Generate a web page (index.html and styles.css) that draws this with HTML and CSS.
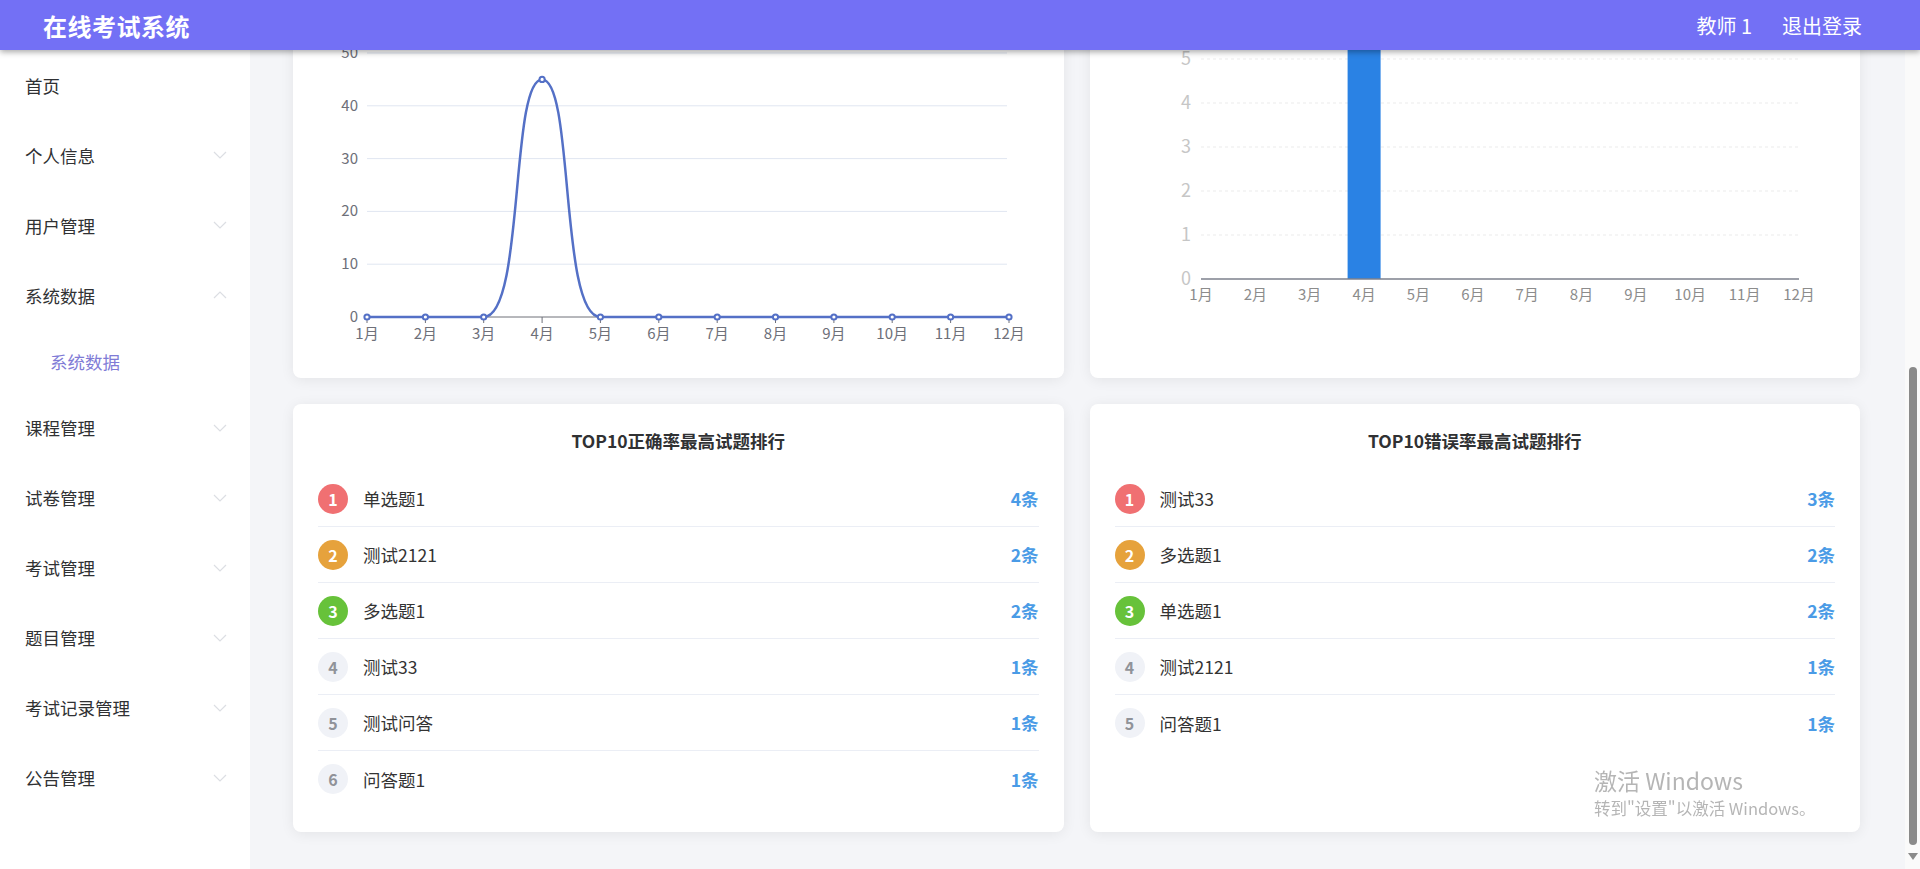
FILE: index.html
```html
<!DOCTYPE html>
<html lang="zh-CN">
<head>
    <meta charset="UTF-8">
    <meta name="viewport" content="width=device-width, initial-scale=1.0">
    <title>在线考试系统</title>
    <link rel="stylesheet" href="styles.css">
</head>
<body>
    <header class="topbar">
        <div class="brand">在线考试系统</div>
        <div class="user-box">
            <span>教师 1</span>
            <span>退出登录</span>
        </div>
    </header>

    <div class="layout">
        <!-- side menu -->
        <nav class="sidebar">
            <div class="menu-item">首页</div>
            <div class="menu-item">个人信息<svg class="arrow" width="14" height="8" viewBox="0 0 14 8"><polyline points="1,1 7,7 13,1"/></svg></div>
            <div class="menu-item">用户管理<svg class="arrow" width="14" height="8" viewBox="0 0 14 8"><polyline points="1,1 7,7 13,1"/></svg></div>
            <div class="menu-item">系统数据<svg class="arrow" width="14" height="8" viewBox="0 0 14 8"><polyline points="1,7 7,1 13,7"/></svg></div>
            <div class="menu-item sub active">系统数据</div>
            <div class="menu-item">课程管理<svg class="arrow" width="14" height="8" viewBox="0 0 14 8"><polyline points="1,1 7,7 13,1"/></svg></div>
            <div class="menu-item">试卷管理<svg class="arrow" width="14" height="8" viewBox="0 0 14 8"><polyline points="1,1 7,7 13,1"/></svg></div>
            <div class="menu-item">考试管理<svg class="arrow" width="14" height="8" viewBox="0 0 14 8"><polyline points="1,1 7,7 13,1"/></svg></div>
            <div class="menu-item">题目管理<svg class="arrow" width="14" height="8" viewBox="0 0 14 8"><polyline points="1,1 7,7 13,1"/></svg></div>
            <div class="menu-item">考试记录管理<svg class="arrow" width="14" height="8" viewBox="0 0 14 8"><polyline points="1,1 7,7 13,1"/></svg></div>
            <div class="menu-item">公告管理<svg class="arrow" width="14" height="8" viewBox="0 0 14 8"><polyline points="1,1 7,7 13,1"/></svg></div>
        </nav>

        <main class="main">
            <div class="content">
                <!-- line chart -->
                <div class="card chart-card">
                    <svg width="769" height="400" class="chart">
                        <g class="grid-line">
                            <line x1="74" y1="75" x2="714" y2="75"/>
                            <line x1="74" y1="127.8" x2="714" y2="127.8"/>
                            <line x1="74" y1="180.6" x2="714" y2="180.6"/>
                            <line x1="74" y1="233.4" x2="714" y2="233.4"/>
                            <line x1="74" y1="286.2" x2="714" y2="286.2"/>
                        </g>
                        <g class="y-label" text-anchor="end">
                            <text x="65" y="80">50</text>
                            <text x="65" y="133">40</text>
                            <text x="65" y="186">30</text>
                            <text x="65" y="238">20</text>
                            <text x="65" y="291">10</text>
                            <text x="65" y="344">0</text>
                        </g>
                        <line class="axis" x1="74" y1="339" x2="716" y2="339"/>
                        <g class="axis">
                            <line x1="74" y1="339" x2="74" y2="345"/>
                            <line x1="132.4" y1="339" x2="132.4" y2="345"/>
                            <line x1="190.7" y1="339" x2="190.7" y2="345"/>
                            <line x1="249.1" y1="339" x2="249.1" y2="345"/>
                            <line x1="307.4" y1="339" x2="307.4" y2="345"/>
                            <line x1="365.8" y1="339" x2="365.8" y2="345"/>
                            <line x1="424.2" y1="339" x2="424.2" y2="345"/>
                            <line x1="482.5" y1="339" x2="482.5" y2="345"/>
                            <line x1="540.9" y1="339" x2="540.9" y2="345"/>
                            <line x1="599.2" y1="339" x2="599.2" y2="345"/>
                            <line x1="657.6" y1="339" x2="657.6" y2="345"/>
                            <line x1="716" y1="339" x2="716" y2="345"/>
                        </g>
                        <g class="x-label" text-anchor="middle">
                            <text x="74" y="361">1月</text>
                            <text x="132.4" y="361">2月</text>
                            <text x="190.7" y="361">3月</text>
                            <text x="249.1" y="361">4月</text>
                            <text x="307.4" y="361">5月</text>
                            <text x="365.8" y="361">6月</text>
                            <text x="424.2" y="361">7月</text>
                            <text x="482.5" y="361">8月</text>
                            <text x="540.9" y="361">9月</text>
                            <text x="599.2" y="361">10月</text>
                            <text x="657.6" y="361">11月</text>
                            <text x="716" y="361">12月</text>
                        </g>
                        <path class="series" d="M74,339 L190.7,339 C231.6,339 217,101.4 249.1,101.4 C281.2,101.4 266.6,339 307.4,339 L716,339"/>
                        <g class="dot">
                            <circle cx="74" cy="339" r="2.6"/>
                            <circle cx="132.4" cy="339" r="2.6"/>
                            <circle cx="190.7" cy="339" r="2.6"/>
                            <circle cx="249.1" cy="101.4" r="2.6"/>
                            <circle cx="307.4" cy="339" r="2.6"/>
                            <circle cx="365.8" cy="339" r="2.6"/>
                            <circle cx="424.2" cy="339" r="2.6"/>
                            <circle cx="482.5" cy="339" r="2.6"/>
                            <circle cx="540.9" cy="339" r="2.6"/>
                            <circle cx="599.2" cy="339" r="2.6"/>
                            <circle cx="657.6" cy="339" r="2.6"/>
                            <circle cx="716" cy="339" r="2.6"/>
                        </g>
                    </svg>
                </div>

                <!-- bar chart -->
                <div class="card chart-card">
                    <svg width="770" height="400" class="chart">
                        <g class="grid-dash">
                            <line x1="111" y1="81" x2="709" y2="81"/>
                            <line x1="111" y1="125" x2="709" y2="125"/>
                            <line x1="111" y1="169" x2="709" y2="169"/>
                            <line x1="111" y1="213" x2="709" y2="213"/>
                            <line x1="111" y1="257" x2="709" y2="257"/>
                        </g>
                        <g class="y-label-light" text-anchor="end">
                            <text x="101" y="87">5</text>
                            <text x="101" y="131">4</text>
                            <text x="101" y="175">3</text>
                            <text x="101" y="219">2</text>
                            <text x="101" y="263">1</text>
                            <text x="101" y="307">0</text>
                        </g>
                        <rect class="bar" x="257.6" y="37" width="33" height="264"/>
                        <line class="bar-axis" x1="111" y1="301" x2="709" y2="301"/>
                        <g class="x-label-bar" text-anchor="middle">
                            <text x="111" y="322">1月</text>
                            <text x="165.4" y="322">2月</text>
                            <text x="219.7" y="322">3月</text>
                            <text x="274.1" y="322">4月</text>
                            <text x="328.4" y="322">5月</text>
                            <text x="382.8" y="322">6月</text>
                            <text x="437.2" y="322">7月</text>
                            <text x="491.5" y="322">8月</text>
                            <text x="545.9" y="322">9月</text>
                            <text x="600.2" y="322">10月</text>
                            <text x="654.6" y="322">11月</text>
                            <text x="709" y="322">12月</text>
                        </g>
                    </svg>
                </div>

                <!-- ranking lists -->
                <div class="card rank-card">
                    <div class="rank-title">TOP10正确率最高试题排行</div>
                    <ul class="rank-list">
                        <li><span class="no no1">1</span><span class="name">单选题1</span><span class="count">4条</span></li>
                        <li><span class="no no2">2</span><span class="name">测试2121</span><span class="count">2条</span></li>
                        <li><span class="no no3">3</span><span class="name">多选题1</span><span class="count">2条</span></li>
                        <li><span class="no">4</span><span class="name">测试33</span><span class="count">1条</span></li>
                        <li><span class="no">5</span><span class="name">测试问答</span><span class="count">1条</span></li>
                        <li><span class="no">6</span><span class="name">问答题1</span><span class="count">1条</span></li>
                    </ul>
                </div>

                <div class="card rank-card">
                    <div class="rank-title">TOP10错误率最高试题排行</div>
                    <ul class="rank-list">
                        <li><span class="no no1">1</span><span class="name">测试33</span><span class="count">3条</span></li>
                        <li><span class="no no2">2</span><span class="name">多选题1</span><span class="count">2条</span></li>
                        <li><span class="no no3">3</span><span class="name">单选题1</span><span class="count">2条</span></li>
                        <li><span class="no">4</span><span class="name">测试2121</span><span class="count">1条</span></li>
                        <li><span class="no">5</span><span class="name">问答题1</span><span class="count">1条</span></li>
                    </ul>
                </div>
            </div>
        </main>

        <!-- page scrollbar -->
        <div class="scrollbar">
            <div class="thumb"></div>
            <div class="down"></div>
        </div>
    </div>

    <div class="watermark">
        <div class="wm-big">激活 Windows</div>
        <div class="wm-small">转到"设置"以激活 Windows。</div>
    </div>
</body>
</html>
```

FILE: styles.css
```css
body {
    margin: 0;
    height: 100vh;
    overflow: hidden;
    display: flex;
    flex-direction: column;
    font-family: "Noto Sans CJK SC", "Liberation Sans", sans-serif;
    color: #303133;
    background: #f4f5f8;
}
.topbar {
    position: relative;
    z-index: 10;
    height: 50px;
    flex-shrink: 0;
    display: flex;
    align-items: center;
    justify-content: space-between;
    padding: 0 58px 0 43px;
    background: #7370f5;
    color: #fff;
    box-shadow: 0 2px 6px rgba(0, 0, 0, 0.35);
}
.brand {
    font-size: 24px;
    font-weight: bold;
    letter-spacing: 0.5px;
}
.user-box {
    display: flex;
    gap: 30px;
    font-size: 20px;
}
.layout {
    flex: 1;
    display: flex;
    min-height: 0;
}
.sidebar {
    width: 250px;
    flex-shrink: 0;
    background: #fff;
}
.menu-item {
    height: 70px;
    display: flex;
    align-items: center;
    justify-content: space-between;
    padding: 0 23px 0 25px;
    font-size: 17.5px;
    color: #303133;
}
.menu-item.sub {
    height: 62.5px;
    padding-left: 50px;
}
.menu-item.active {
    color: #7f7bd6;
}
.arrow polyline {
    fill: none;
    stroke: #dcdee3;
    stroke-width: 1.2;
}
.main {
    flex: 1;
    overflow: hidden;
}
.content {
    margin-top: -72px;
    padding: 0 45px 0 43px;
    display: grid;
    grid-template-columns: 1fr 1fr;
    grid-template-rows: 400px 428px;
    gap: 26px 26px;
}
.card {
    background: #fff;
    border-radius: 8px;
    box-shadow: 0 2px 14px rgba(0, 0, 0, 0.07);
    overflow: hidden;
}
.chart {
    display: block;
    font-family: "Noto Sans CJK SC", "Liberation Sans", sans-serif;
}
.grid-line line {
    stroke: #e0e6f1;
    stroke-width: 1;
}
.grid-dash line {
    stroke: #ebebeb;
    stroke-width: 1;
    stroke-dasharray: 3 3;
}
.y-label text, .x-label text {
    font-size: 15px;
    fill: #6e7079;
}
.y-label-light text {
    font-size: 18px;
    fill: #c6c6c6;
}
.x-label-bar text {
    font-size: 15px;
    fill: #8c8c8c;
}
.axis, .axis line {
    stroke: #6e7079;
    stroke-width: 1;
}
.series {
    fill: none;
    stroke: #5470c6;
    stroke-width: 2.5;
}
.dot circle {
    fill: #fff;
    stroke: #5470c6;
    stroke-width: 2;
}
.bar {
    fill: #2a82e4;
}
.bar-axis {
    stroke: #7d818d;
    stroke-width: 1.5;
}
.rank-card {
    padding: 25px;
}
.rank-title {
    text-align: center;
    font-size: 17.5px;
    font-weight: bold;
    line-height: 24px;
    color: #303133;
}
.rank-list {
    list-style: none;
    margin: 18px 0 0;
    padding: 0;
}
.rank-list li {
    height: 56px;
    box-sizing: border-box;
    display: flex;
    align-items: center;
    border-bottom: 1px solid #ebeef5;
    font-size: 17.5px;
}
.rank-list li:last-child {
    border-bottom: none;
}
.no {
    width: 30px;
    height: 30px;
    border-radius: 50%;
    display: flex;
    align-items: center;
    justify-content: center;
    margin-right: 15px;
    background: #f0f2f7;
    color: #909399;
    font-size: 16px;
    font-weight: bold;
}
.no1 { background: #f07072; color: #fff; }
.no2 { background: #e6a23c; color: #fff; }
.no3 { background: #67c23a; color: #fff; }
.name {
    flex: 1;
    color: #333;
}
.count {
    color: #4a9be6;
    font-weight: bold;
}
.scrollbar {
    width: 15px;
    flex-shrink: 0;
    background: #fafafa;
    display: flex;
    flex-direction: column;
    align-items: center;
}
.thumb {
    margin-top: 317px;
    width: 8px;
    height: 478px;
    border-radius: 4px;
    background: #8a8a8a;
}
.down {
    margin-top: 8px;
    width: 0;
    height: 0;
    border-left: 5px solid transparent;
    border-right: 5px solid transparent;
    border-top: 7px solid #8a8a8a;
}
.watermark {
    position: fixed;
    left: 1594px;
    top: 764px;
    color: rgba(150, 150, 150, 0.7);
    font-family: "Noto Sans CJK SC", "Open Sans", sans-serif;
}
.wm-big {
    font-size: 23px;
    line-height: 32px;
}
.wm-small {
    font-size: 16.5px;
    line-height: 24px;
}
```
